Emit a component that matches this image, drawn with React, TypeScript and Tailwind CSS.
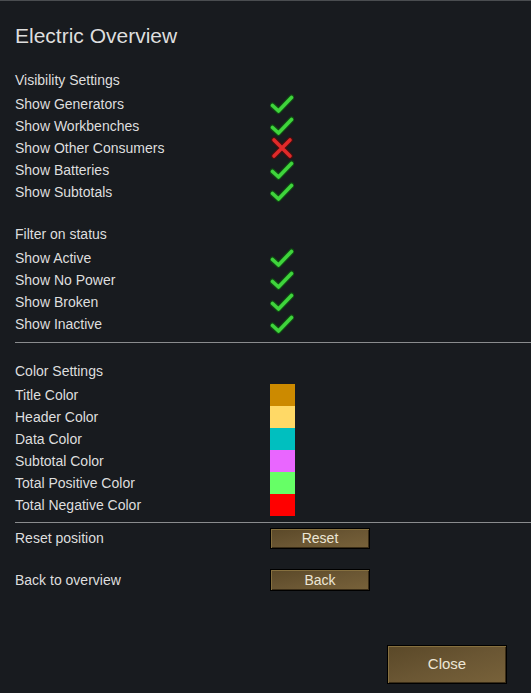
const font = { fontFamily: '"Liberation Sans", Arial, sans-serif' };

function Check() {
    return (
        <svg width="24" height="22" viewBox="0 0 24 22">
            <path d="M2.5 12.5 L8.5 18 L21.5 4.5" fill="none" stroke="#0f4a12" strokeWidth="6" strokeLinecap="round" strokeLinejoin="round" />
            <path d="M2.5 12.5 L8.5 18 L21.5 4.5" fill="none" stroke="#3fd43c" strokeWidth="3.6" strokeLinecap="round" strokeLinejoin="round" />
        </svg>
    );
}

function Cross() {
    return (
        <svg width="24" height="22" viewBox="0 0 24 22">
            <path d="M4 3 L20 19 M20 3 L4 19" fill="none" stroke="#4a0e0e" strokeWidth="6" strokeLinecap="round" />
            <path d="M4 3 L20 19 M20 3 L4 19" fill="none" stroke="#e02a2a" strokeWidth="3.6" strokeLinecap="round" />
        </svg>
    );
}

function Row({ label, children }: { label: string; children?: React.ReactNode }) {
    return (
        <div className="flex items-center h-[22px]">
            <div className="w-[255px]">{label}</div>
            <div className="flex items-center">{children}</div>
        </div>
    );
}

function Swatch({ color }: { color: string }) {
    return <div className="w-[25px] h-[22px]" style={{ backgroundColor: color }} />;
}

function GameButton({ label, className }: { label: string; className: string }) {
    return (
        <button className={`border border-black bg-gradient-to-br from-[#5a4828] via-[#6a5633] to-[#78623a] text-[#ece6d6] shadow-[inset_1px_1px_0_#86703f,inset_-1px_-1px_0_#3a2d17] flex items-center justify-center ${className}`}>
            {label}
        </button>
    );
}

export default function App() {
    const visibility: [string, boolean][] = [
        ["Show Generators", true],
        ["Show Workbenches", true],
        ["Show Other Consumers", false],
        ["Show Batteries", true],
        ["Show Subtotals", true],
    ];
    const status = ["Show Active", "Show No Power", "Show Broken", "Show Inactive"];
    const colors: [string, string][] = [
        ["Title Color", "#cc8a00"],
        ["Header Color", "#ffd966"],
        ["Data Color", "#00bfbf"],
        ["Subtotal Color", "#e966ff"],
        ["Total Positive Color", "#66ff66"],
        ["Total Negative Color", "#ff0000"],
    ];

    return (
        <div style={font} className="w-[531px] h-[693px] bg-[#181b1f] border-t border-[#4a4d50] text-[#dedede] text-[14px] flex flex-col overflow-hidden">
            <div className="pl-[15px] pt-[23px] flex flex-col">
                <div className="text-[21px] h-[24px] leading-[24px]">Electric Overview</div>

                <div className="mt-[21px]">
                    <Row label="Visibility Settings" />
                </div>
                <div className="mt-[2px]">
                    {visibility.map(([l, on]) => (
                        <Row key={l} label={l}>{on ? <Check /> : <Cross />}</Row>
                    ))}
                </div>

                <div className="mt-[20px]">
                    <Row label="Filter on status" />
                </div>
                <div className="mt-[2px]">
                    {status.map((l) => (
                        <Row key={l} label={l}><Check /></Row>
                    ))}
                </div>

                <div className="mt-[7px] h-px bg-[#8a8c8e]" />

                <div className="mt-[17px]">
                    <Row label="Color Settings" />
                </div>
                <div className="mt-[2px]">
                    {colors.map(([l, c]) => (
                        <Row key={l} label={l}><Swatch color={c} /></Row>
                    ))}
                </div>

                <div className="mt-[6px] h-px bg-[#8a8c8e]" />

                <div className="mt-[4px] flex items-center h-[22px]">
                    <div className="w-[255px]">Reset position</div>
                    <GameButton label="Reset" className="w-[100px] h-[21px]" />
                </div>
                <div className="mt-[20px] flex items-center h-[22px]">
                    <div className="w-[255px]">Back to overview</div>
                    <GameButton label="Back" className="w-[100px] h-[22px]" />
                </div>
            </div>
            <div className="flex justify-end pr-[24px] mt-[54px]">
                <GameButton label="Close" className="w-[120px] h-[39px] text-[15px]" />
            </div>
        </div>
    );
}
